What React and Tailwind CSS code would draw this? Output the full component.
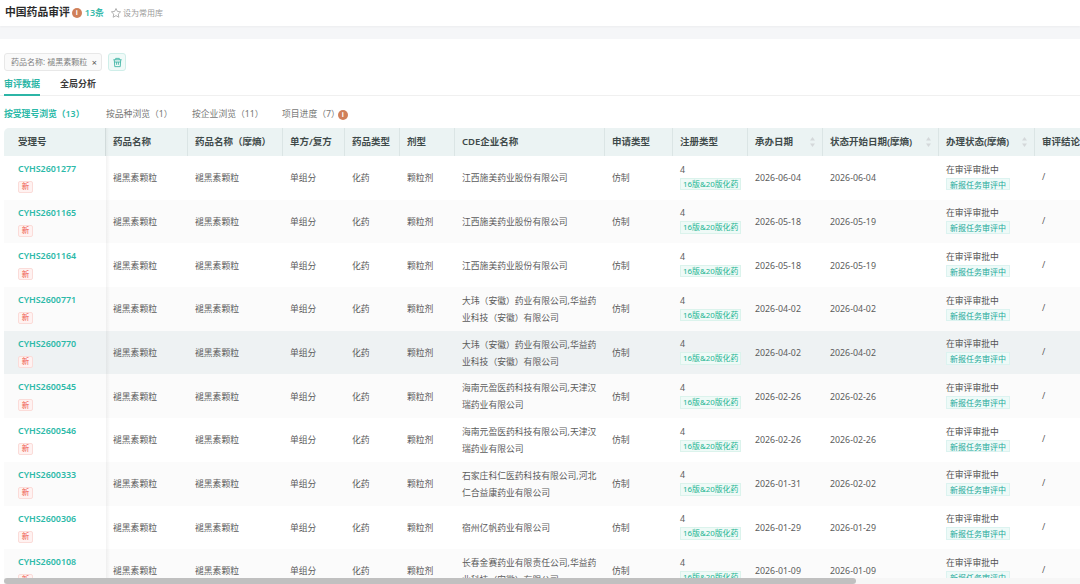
const FONT = "font-['Noto_Sans','Noto_Sans_CJK_SC',sans-serif]";

const cols = [
  { t: "受理号", w: "w-[102px]", p: "pl-[14px]" },
  { t: "药品名称", w: "w-[82px]" },
  { t: "药品名称（摩熵）", w: "w-[95px]" },
  { t: "单方/复方", w: "w-[62px]" },
  { t: "药品类型", w: "w-[55px]" },
  { t: "剂型", w: "w-[55px]" },
  { t: "CDE企业名称", w: "w-[150px]" },
  { t: "申请类型", w: "w-[68px]" },
  { t: "注册类型", w: "w-[75px]" },
  { t: "承办日期", w: "w-[75px]", sort: true },
  { t: "状态开始日期(摩熵)", w: "w-[116px]", sort: true },
  { t: "办理状态(摩熵)", w: "w-[96px]", sort: true },
  { t: "审评结论", w: "w-[90px]" },
];

const JX = "江西施美药业股份有限公司";
const DW = ["大玮（安徽）药业有限公司,华益药", "业科技（安徽）有限公司"];
const HN = ["海南元盈医药科技有限公司,天津汉", "瑞药业有限公司"];

const rows = [
  { id: "CYHS2601277", co: [JX], a: "2026-06-04", b: "2026-06-04" },
  { id: "CYHS2601165", co: [JX], a: "2026-05-18", b: "2026-05-19" },
  { id: "CYHS2601164", co: [JX], a: "2026-05-18", b: "2026-05-19" },
  { id: "CYHS2600771", co: DW, a: "2026-04-02", b: "2026-04-02" },
  { id: "CYHS2600770", co: DW, a: "2026-04-02", b: "2026-04-02", hover: true },
  { id: "CYHS2600545", co: HN, a: "2026-02-26", b: "2026-02-26" },
  { id: "CYHS2600546", co: HN, a: "2026-02-26", b: "2026-02-26" },
  { id: "CYHS2600333", co: ["石家庄科仁医药科技有限公司,河北", "仁合益康药业有限公司"], a: "2026-01-31", b: "2026-02-02" },
  { id: "CYHS2600306", co: ["宿州亿帆药业有限公司"], a: "2026-01-29", b: "2026-01-29" },
  { id: "CYHS2600108", co: ["长春金赛药业有限责任公司,华益药", "业科技（安徽）有限公司"], a: "2026-01-09", b: "2026-01-09" },
];

function Info({ className }) {
  return (
    <span className={`inline-flex w-[10px] h-[10px] rounded-full bg-[#d0805a] text-white text-[7px] font-bold items-center justify-center leading-none ${className || ""}`}>i</span>
  );
}

function Sort() {
  return (
    <svg width="7" height="12" viewBox="0 0 7 12" className="absolute right-[6px] top-[8px]">
      <path d="M3.5 1 L6 4.5 H1 Z" fill="#d4d8da" />
      <path d="M3.5 11 L6 7.5 H1 Z" fill="#d4d8da" />
    </svg>
  );
}

function Edge() {
  return <div className="absolute left-full top-0 bottom-0 w-[4px] bg-gradient-to-r from-black/5 to-transparent" />;
}

function Cell({ w, className, children }) {
  return <div className={`${w} shrink-0 flex flex-col justify-center pl-[7px] pt-[2px] ${className || ""}`}>{children}</div>;
}

function Row({ r, i }) {
  const bg = r.hover ? "bg-[#eef2f3]" : i % 2 === 1 ? "bg-[#fbfbfb]" : "bg-white";
  return (
    <div className={`flex h-[43.7px] shrink-0 text-[8.8px] text-[#5c5c5c] ${bg}`}>
      <div className="w-[102px] shrink-0 pl-[14px] pt-[6px] relative">
        <div className="text-[8.9px] font-semibold text-[#2cb9a8] leading-[13px]">{r.id}</div>
        <div className="mt-[6px] w-[15px] h-[12px] flex items-center justify-center bg-[#fff2f1] border border-[#fbdcd9] rounded-[2px] text-[7.5px] text-[#ee5a50] leading-none">新</div>
        <Edge />
      </div>
      <Cell w="w-[82px]">褪黑素颗粒</Cell>
      <Cell w="w-[95px]">褪黑素颗粒</Cell>
      <Cell w="w-[62px]">单组分</Cell>
      <Cell w="w-[55px]">化药</Cell>
      <Cell w="w-[55px]">颗粒剂</Cell>
      <Cell w="w-[150px]" className="leading-[17px] whitespace-nowrap">
        {r.co.map((l) => <div key={l}>{l}</div>)}
      </Cell>
      <Cell w="w-[68px]">仿制</Cell>
      <Cell w="w-[75px]" className="items-start">
        <div className="leading-[13px] mt-[-4px]">4</div>
        <div className="mt-[1px] h-[12.5px] px-[2px] bg-[#effaf7] border border-[#dbf3ec] text-[#22b592] text-[7.9px] leading-[11px] whitespace-nowrap">16版&amp;20版化药</div>
      </Cell>
      <Cell w="w-[75px]">{r.a}</Cell>
      <Cell w="w-[116px]">{r.b}</Cell>
      <Cell w="w-[96px]" className="items-start">
        <div className="leading-[13px] mt-[-4px] text-[#555]">在审评审批中</div>
        <div className="mt-[1px] h-[12.5px] px-[3px] bg-[#eefaf8] border border-[#dcf3f0] text-[#20a998] text-[8px] leading-[11px] whitespace-nowrap">新报任务审评中</div>
      </Cell>
      <Cell w="w-[90px]"><span className="mt-[-2px]">/</span></Cell>
    </div>
  );
}

export default function App() {
  return (
    <div className={`${FONT} relative w-[1080px] h-[584px] overflow-hidden bg-white flex flex-col`}>
      <div className="h-[26px] shrink-0 flex items-center pl-[5px] pb-[1px] relative shadow-[0_1px_2px_rgba(0,0,0,0.04)]">
        <span className="text-[10.8px] font-bold text-[#2b2b2b] leading-none">中国药品审评</span>
        <Info className="ml-[2px]" />
        <span className="ml-[3px] text-[9px] font-semibold text-[#35b9aa]">13条</span>
        <svg width="12" height="12" viewBox="0 0 24 24" fill="none" stroke="#a8a8a8" strokeWidth="1.8" strokeLinejoin="round" className="ml-[6px]">
          <path d="M12 3l2.8 5.9 6.4.8-4.7 4.4 1.2 6.4L12 17.3l-5.7 3.2 1.2-6.4-4.7-4.4 6.4-.8z" />
        </svg>
        <span className="ml-[1px] text-[8px] text-[#9a9a9a]">设为常用库</span>
      </div>
      <div className="h-[13px] shrink-0 bg-[#f5f6f8]" />
      <div className="h-[14px] shrink-0" />
      <div className="h-[18px] shrink-0 flex items-center pl-[4px] gap-[6px]">
        <div className="h-[18px] w-[98px] flex items-center justify-between pl-[6px] pr-[4px] bg-[#fafafa] border border-[#e8e8e8] rounded-[3px] text-[8px] text-[#808080] whitespace-nowrap">
          <span>药品名称: 褪黑素颗粒</span>
          <span className="text-[#555] text-[9px] leading-none">×</span>
        </div>
        <div className="w-[18px] h-[18px] flex items-center justify-center bg-[#f0faf8] border border-[#cfeee9] rounded-[3px]">
          <svg width="11" height="11" viewBox="0 0 24 24" fill="none" stroke="#47b8a8" strokeWidth="2">
            <path d="M3 6h18M8 6V3h8v3M5 6l1 15h12l1-15M10 11v6M14 11v6M5 11h14" />
          </svg>
        </div>
      </div>
      <div className="h-[20px] mt-[5px] shrink-0 flex items-start pl-[4px] gap-[20px] text-[9px] font-semibold border-b border-[#f0f0f0]">
        <div className="h-[20px] w-[36px] text-[#2cb5a6] border-b-2 border-[#2cb5a6] leading-[15px] whitespace-nowrap">审评数据</div>
        <div className="text-[#3a3a3a] leading-[15px]">全局分析</div>
      </div>
      <div className="h-[32px] shrink-0 flex items-center pl-[4px] pt-[5px] text-[8.8px] text-[#777] whitespace-nowrap">
        <span className="font-semibold text-[#2cb9a8] w-[102px]">按受理号浏览（13）</span>
        <span className="w-[86px]">按品种浏览（1）</span>
        <span className="w-[90px]">按企业浏览（11）</span>
        <span>项目进度（7）</span>
        <Info className="ml-[-2px]" />
      </div>
      <div className="pl-[4px] flex flex-col">
        <div className="flex h-[28px] shrink-0 bg-[#ebf3f3] rounded-tl-[5px] text-[9.5px] font-semibold text-[#3f4a4a] whitespace-nowrap">
          {cols.map((c, i) => (
            <div
              key={c.t}
              className={`${c.w} shrink-0 relative flex items-center ${c.p || "pl-[7px]"} ${i < cols.length - 1 ? "border-r border-[#dbe5e5]" : ""}`}
            >
              {c.t}
              {c.sort ? <Sort /> : null}
              {i === 0 ? <Edge /> : null}
            </div>
          ))}
        </div>
        {rows.map((r, i) => <Row key={r.id} r={r} i={i} />)}
      </div>
      <div className="absolute left-[4px] right-0 bottom-0 h-[6px] bg-[#f6f6f6]">
        <div className="w-[852px] h-full rounded-[3px] bg-[#c0c0c0]" />
      </div>
    </div>
  );
}
